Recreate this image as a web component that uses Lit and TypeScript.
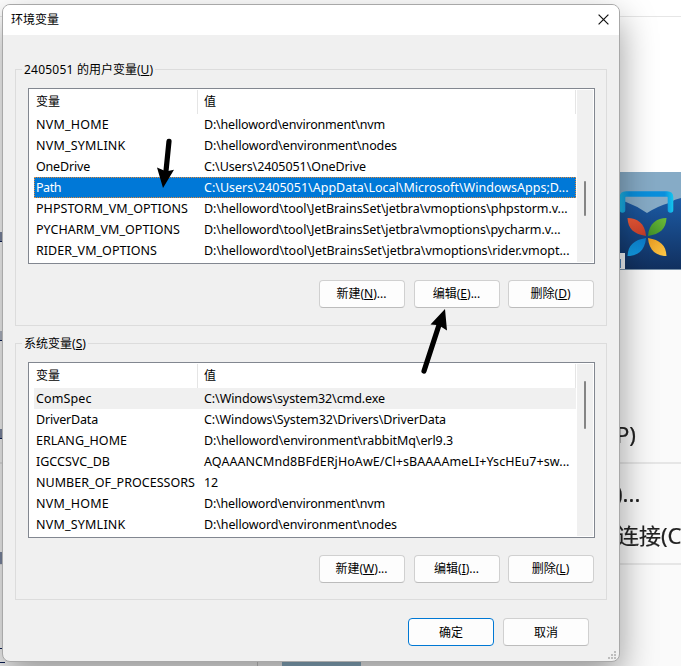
import { LitElement, html, css, svg } from "lit";
import { customElement, property } from "lit/decorators.js";

type Row = { name: string; nw: number; value: string; vw: number };

const userRows: Row[] = [
  { name: "NVM_HOME", nw: 73, value: "D:\\helloword\\environment\\nvm", vw: 181 },
  { name: "NVM_SYMLINK", nw: 89.5, value: "D:\\helloword\\environment\\nodes", vw: 193 },
  { name: "OneDrive", nw: 54, value: "C:\\Users\\2405051\\OneDrive", vw: 162 },
  { name: "Path", nw: 25, value: "C:\\Users\\2405051\\AppData\\Local\\Microsoft\\WindowsApps;D...", vw: 364.5 },
  { name: "PHPSTORM_VM_OPTIONS", nw: 152, value: "D:\\helloword\\tool\\JetBrainsSet\\jetbra\\vmoptions\\phpstorm.v...", vw: 363.5 },
  { name: "PYCHARM_VM_OPTIONS", nw: 144, value: "D:\\helloword\\tool\\JetBrainsSet\\jetbra\\vmoptions\\pycharm.v...", vw: 356.5 },
  { name: "RIDER_VM_OPTIONS", nw: 121, value: "D:\\helloword\\tool\\JetBrainsSet\\jetbra\\vmoptions\\rider.vmopt...", vw: 365.5 },
];

const systemRows: Row[] = [
  { name: "ComSpec", nw: 55.5, value: "C:\\Windows\\system32\\cmd.exe", vw: 181 },
  { name: "DriverData", nw: 62, value: "C:\\Windows\\System32\\Drivers\\DriverData", vw: 242 },
  { name: "ERLANG_HOME", nw: 91, value: "D:\\helloword\\environment\\rabbitMq\\erl9.3", vw: 249 },
  { name: "IGCCSVC_DB", nw: 74, value: "AQAAANCMnd8BFdERjHoAwE/Cl+sBAAAAmeLI+YscHEu7+sw...", vw: 365.5 },
  { name: "NUMBER_OF_PROCESSORS", nw: 159, value: "12", vw: 14 },
  { name: "NVM_HOME", nw: 73, value: "D:\\helloword\\environment\\nvm", vw: 181 },
  { name: "NVM_SYMLINK", nw: 89.5, value: "D:\\helloword\\environment\\nodes", vw: 193 },
];

/* Text tracked so that it fills a given advance width. */
@customElement("fit-text")
class FitText extends LitElement {
  @property() text = "";
  @property({ type: Number }) width = 0;
  static styles = css`
    :host { display: inline-block; white-space: pre; }
  `;
  render() {
    return html`<span>${this.text}</span>`;
  }
  updated() {
    const span = this.renderRoot.querySelector("span") as HTMLElement;
    span.style.letterSpacing = "0px";
    const natural = span.getBoundingClientRect().width;
    span.style.letterSpacing = (this.width - natural) / this.text.length + "px";
  }
}

@customElement("variable-list")
class VariableList extends LitElement {
  @property({ attribute: false }) rows: Row[] = [];
  @property({ type: Number }) selected = -1;
  @property({ type: Number }) hovered = -1;
  @property({ type: Number }) thumbTop = 0;
  @property({ type: Number }) thumbSize = 0;
  static styles = css`
    :host { display: flex; box-sizing: border-box; height: 176px; border: 1px solid #828790; background: #fff; padding: 1px 1px 1px 5px; }
    .table { width: 542px; flex: none; }
    .head, .row { display: grid; grid-template-columns: 164px 378px; box-sizing: border-box; }
    .head { height: 24px; line-height: 24px; }
    .head span { border-right: 1px solid #e5e5e5; padding-left: 2px; }
    .head span + span { padding-left: 6px; }
    .row { height: 21px; line-height: 22px; font-size: 12.5px; }
    .row > :first-child { padding-left: 2px; }
    .row > :last-child { padding-left: 6px; }
    .hovered { background: #f0f0f0; }
    .selected { background: #0078d7; color: #fff; outline: 1px dotted #e08a3c; outline-offset: -1px; }
    .bar { width: 16px; margin-left: 1px; background: #f0f0f0; flex: none; }
    .thumb { width: 2px; margin-left: 7px; border-radius: 1px; background: #858585; }
  `;
  render() {
    return html`
      <div class="table">
        <div class="head"><span>变量</span><span>值</span></div>
        ${this.rows.map(
          (r, i) => html`<div class="row ${i === this.selected ? "selected" : ""} ${i === this.hovered ? "hovered" : ""}">
            <div><fit-text .text=${r.name} .width=${r.nw}></fit-text></div>
            <div><fit-text .text=${r.value} .width=${r.vw}></fit-text></div>
          </div>`
        )}
      </div>
      <div class="bar">
        <div class="thumb" style="height:${this.thumbSize}px;transform:translateY(${this.thumbTop}px)"></div>
      </div>
    `;
  }
}

const key = (label: string, k: string, tail = "") => html`${label}(<u>${k}</u>)${tail}`;

@customElement("app-root")
class AppRoot extends LitElement {
  static styles = css`
    :host {
      display: block; position: relative; box-sizing: border-box; width: 681px; height: 666px; overflow: hidden;
      padding: 4px 0 0 2px; background: #fff; color: #000;
      font: 12px "Noto Sans", "Noto Sans CJK SC", sans-serif;
    }
    .backdrop { position: absolute; inset: 0; overflow: hidden; }
    .lower { position: absolute; left: 0; right: 0; top: 270px; bottom: 0; background: #fafafa; }
    .rule { position: absolute; left: 0; right: 0; height: 1px; background: #e6e6e6; }
    .r1 { top: 16px; }
    .r2 { top: 462px; height: 2px; }
    .r3 { top: 563px; height: 2px; }
    .photo { position: absolute; left: 619px; top: 172px; }
    .ghost { position: absolute; font: 22px/30px "Noto Sans", "Noto Sans CJK SC", sans-serif; color: #222; white-space: pre; filter: blur(0.6px); -webkit-text-stroke: 0.2px #222; }
    .g1 { left: 616px; top: 419px; }
    .g2 { left: 616px; top: 478px; }
    .g3 { left: 617px; top: 520px; }
    .link { position: absolute; left: 0; width: 2px; height: 9px; background: #7f8aa5; border-bottom: 1px solid #0b1f55; }
    .l1 { top: 232px; }
    .l2 { top: 331px; background: #b4bac8; }
    .l3 { top: 429px; }
    .l4 { top: 552px; border: 0; height: 12px; }
    .l5 { top: 648px; height: 13px; width: 5px; background: none; border-top: 1px solid #0b1f55; }
    .strip { position: absolute; left: 282px; top: 660px; width: 79px; height: 6px; background: #8fb2c8; }
    .tick { position: absolute; left: 257px; top: 660px; width: 1px; height: 6px; background: #ccc; }
    .dialog {
      position: relative; box-sizing: border-box; width: 618px; height: 658px; border: 1px solid #a8a8a8;
      border-radius: 8px; background: #f0f0f0; box-shadow: 0 15px 36px rgba(0, 0, 0, 0.4);
    }
    .title { display: flex; align-items: center; justify-content: space-between; box-sizing: border-box; height: 30px; padding: 0 10px 2px 8px; background: #fff; border-radius: 7px 7px 0 0; }
    fieldset {
      display: flex; flex-direction: column; box-sizing: border-box; position: relative; margin: 34px 0 0 12px; padding: 18px 11px 0 12px;
      min-width: 0; width: 592px; height: 257px; border: 1px solid #dcdcdc;
    }
    fieldset + fieldset { margin-top: 17px; }
    .legend { position: absolute; left: 6px; top: -9px; line-height: 17px; padding: 0 2px; background: #f0f0f0; white-space: pre; }
    variable-list { width: 567px; }
    .buttons { display: flex; justify-content: flex-end; gap: 8px; padding-top: 16px; width: 566px; }
    .buttons.sys { padding-top: 17px; }
    .buttons button:first-child { margin-right: 1px; }
    button {
      box-sizing: border-box; width: 86px; height: 28px; padding: 0 0 1px; border: 1px solid #d0d0d0; border-bottom-color: #bcbcbc;
      border-radius: 4px; background: #fdfdfd; color: #000; font: inherit; white-space: nowrap;
    }
    .buttons button { padding: 0 1px 2px 0; }
    .primary { border-color: #0078d4; }
    .actions { display: flex; justify-content: flex-end; gap: 9px; padding: 18px 30px 0 0; }
    u { text-underline-offset: 1px; }
    .grip { position: absolute; right: 2px; bottom: 1px; }
    .arrows { position: absolute; left: 0; top: 0; pointer-events: none; }
  `;
  render() {
    return html`
      <div class="backdrop">
        <div class="lower"></div>
        <div class="rule r1"></div>
        <div class="rule r2"></div>
        <div class="rule r3"></div>
        ${this.photo()}
        <div class="ghost g1">P)</div>
        <div class="ghost g2">)...</div>
        <div class="ghost g3">连接(C</div>
        <div class="link l1"></div><div class="link l2"></div><div class="link l3"></div>
        <div class="link l4"></div><div class="link l5"></div>
        <div class="strip"></div><div class="tick"></div>
      </div>
      <div class="dialog">
        <div class="title">
          <span>环境变量</span>
          <svg width="11" height="11" viewBox="0 0 11 11"><path d="M.6.6l9.8 9.8M10.4.6L.6 10.4" stroke="#111" stroke-width="1.2" /></svg>
        </div>
        <fieldset>
          <div class="legend"><fit-text .text=${"2405051 "} .width=${53}></fit-text>的用户变量(<u>U</u>)</div>
          <variable-list .rows=${userRows} .selected=${3} .thumbTop=${91} .thumbSize=${35}></variable-list>
          <div class="buttons">
            <button>${key("新建", "N", "...")}</button>
            <button>${key("编辑", "E", "...")}</button>
            <button>${key("删除", "D")}</button>
          </div>
        </fieldset>
        <fieldset>
          <div class="legend">${key("系统变量", "S")}</div>
          <variable-list .rows=${systemRows} .hovered=${0} .thumbTop=${17} .thumbSize=${48}></variable-list>
          <div class="buttons sys">
            <button>${key("新建", "W", "...")}</button>
            <button>${key("编辑", "I", "...")}</button>
            <button>${key("删除", "L")}</button>
          </div>
        </fieldset>
        <div class="actions"><button class="primary">确定</button><button>取消</button></div>
        <svg class="grip" width="9" height="9" viewBox="0 0 9 9" fill="#bdbdbd">
          ${[[6, 0], [3, 3], [6, 3], [0, 6], [3, 6], [6, 6]].map(([x, y]) => svg`<rect x=${x} y=${y} width="2" height="2" />`)}
        </svg>
      </div>
      <svg class="arrows" width="681" height="666" viewBox="0 0 681 666">
        <path d="M169 141.3L165.8 173" stroke="#000" stroke-width="5.2" stroke-linecap="round" />
        <path d="M163 188L157 167.5L164 170.5L168 171L174 169.8Z" />
        <path d="M424 371L439 325" stroke="#000" stroke-width="5.2" stroke-linecap="round" />
        <path d="M445 309L447 330.5L441.5 327L436.5 325L430.5 324.5Z" />
      </svg>
    `;
  }
  photo() {
    return html`<svg class="photo" width="62" height="98" viewBox="0 0 62 98">
      <defs>
        <linearGradient id="navy" x2="0" y2="1"><stop stop-color="#1c5ba5" /><stop offset="1" stop-color="#11305f" /></linearGradient>
        <linearGradient id="frame" gradientUnits="userSpaceOnUse" x1="2" x2="54"><stop stop-color="#1cb4e6" /><stop offset=".16" stop-color="#0a8fdc" /><stop offset=".84" stop-color="#0a8fdc" /><stop offset="1" stop-color="#14c4ee" /></linearGradient>
        <linearGradient id="red" x2="1" y2="1"><stop stop-color="#f8603a" /><stop offset="1" stop-color="#c03a28" /></linearGradient>
        <linearGradient id="green" x1="1" x2="0" y2="1"><stop stop-color="#6cbc38" /><stop offset="1" stop-color="#3f8c2a" /></linearGradient>
        <linearGradient id="blue" x2="1" y1="1" y2="0"><stop stop-color="#14a4ec" /><stop offset="1" stop-color="#0a78c8" /></linearGradient>
        <linearGradient id="amber" x2="1" y2="1"><stop stop-color="#e89a20" /><stop offset="1" stop-color="#fcc848" /></linearGradient>
      </defs>
      <rect width="62" height="98" fill="#86abc6" />
      <path d="M0 28L7 30Q18 34 28 41Q39 34 50 31Q56 27 62 26V97H0Z" fill="url(#navy)" />
      <path d="M3.5 38V25.5Q3.5 22 7 22H48Q51.5 22 51.5 25.5V38" fill="none" stroke="url(#frame)" stroke-width="5.6" stroke-linecap="round" />
      <path d="M8.5 46C18 46 26 51 27 64C15 62 9 57 8.5 46Z" fill="url(#red)" />
      <path d="M47.5 46C38 46 30 51 29 64C41 62 47 57 47.5 46Z" fill="url(#green)" />
      <path d="M8.5 84C18 84 26 79 27 66C15 68 9 73 8.5 84Z" fill="url(#blue)" />
      <path d="M47.5 84C38 84 30 79 29 66C41 68 47 73 47.5 84Z" fill="url(#amber)" />
      <rect x="0" y="81" width="6" height="17" fill="#eef1f5" /><rect x="0" y="87" width="2" height="9" fill="#4d80b5" />
      <path d="M0 97.5H62" stroke="#7890a8" />
    </svg>`;
  }
}
